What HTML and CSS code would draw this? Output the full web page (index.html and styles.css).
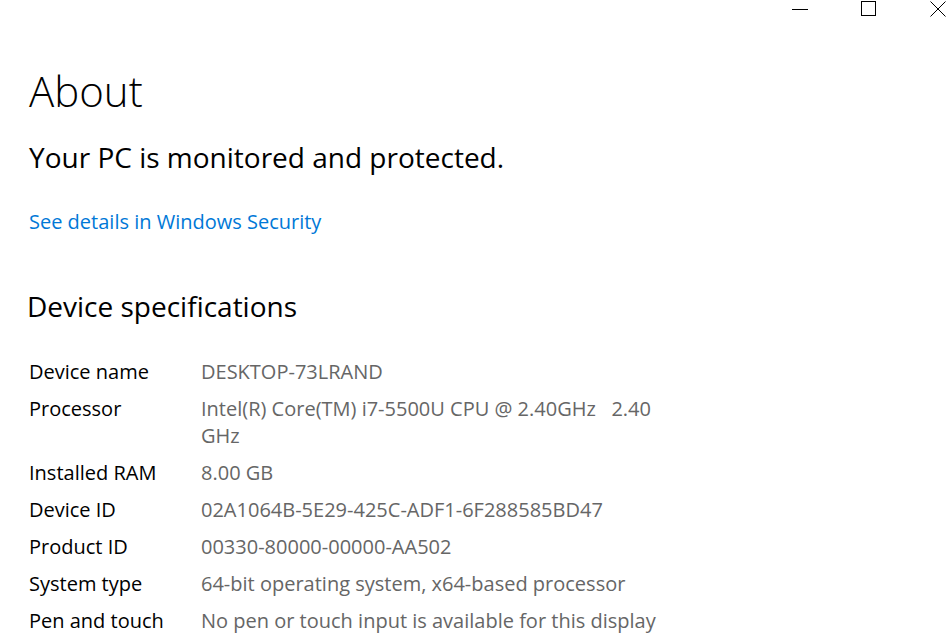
FILE: index.html
```html
<!DOCTYPE html>
<html lang="en">
<head>
  <meta charset="UTF-8" />
  <title>About</title>
  <link rel="stylesheet" href="styles.css">
</head>
<body>
  <div class="titlebar">
    <span class="ctl">
      <svg width="16" height="16" viewBox="0 0 16 16"><path d="M0 8.5H16" stroke="#000" stroke-width="1"/></svg>
    </span>
    <span class="ctl">
      <svg width="16" height="16" viewBox="0 0 16 16"><rect x="0.5" y="0.5" width="14" height="14" fill="none" stroke="#000" stroke-width="1"/></svg>
    </span>
    <span class="ctl">
      <svg width="16" height="16" viewBox="0 0 16 16"><path d="M0.5 0.5L15.5 15.5M15.5 0.5L0.5 15.5" stroke="#000" stroke-width="1"/></svg>
    </span>
  </div>

  <div class="page">
    <h1>About</h1>
    <h2 class="status">Your PC is monitored and protected.</h2>
    <a class="link" href="#">See details in Windows Security</a>

    <h2 class="section">Device specifications</h2>
    <div class="specs">
      <div class="label">Device name</div><div class="value">DESKTOP-73LRAND</div>
      <div class="label">Processor</div><div class="value">Intel(R) Core(TM) i7-5500U CPU @ 2.40GHz &nbsp; 2.40 GHz</div>
      <div class="label">Installed RAM</div><div class="value">8.00 GB</div>
      <div class="label">Device ID</div><div class="value">02A1064B-5E29-425C-ADF1-6F288585BD47</div>
      <div class="label">Product ID</div><div class="value">00330-80000-00000-AA502</div>
      <div class="label">System type</div><div class="value">64-bit operating system, x64-based processor</div>
      <div class="label">Pen and touch</div><div class="value">No pen or touch input is available for this display</div>
    </div>
  </div>
</body>
</html>
```

FILE: styles.css
```css
body {
  margin: 0;
  background: #fff;
  color: #000;
  font-family: 'Open Sans', 'Noto Sans', sans-serif;
  overflow: hidden;
}
.titlebar {
  display: flex;
  justify-content: flex-end;
  gap: 53px;
  padding: 1px 4px 0 0;
  height: 20px;
}
.ctl svg {
  display: block;
}
.page {
  padding: 0 0 0 29px;
}
h1 {
  font-size: 42px;
  font-weight: 300;
  margin: 40px 0 0 0;
  line-height: 60px;
}
.status {
  font-size: 28px;
  font-weight: 400;
  margin: 16px 0 0 0;
  line-height: 40px;
}
.link {
  display: inline-block;
  margin-top: 31px;
  color: #0078d7;
  font-size: 20px;
  text-decoration: none;
  line-height: 28px;
}
.section {
  font-size: 28px;
  font-weight: 400;
  margin: 50px 0 0 -2px;
  line-height: 40px;
}
.specs {
  display: grid;
  grid-template-columns: 172px 470px;
  row-gap: 10px;
  margin-top: 32px;
  font-size: 20px;
  line-height: 27px;
}
.value {
  color: #666;
}
```
